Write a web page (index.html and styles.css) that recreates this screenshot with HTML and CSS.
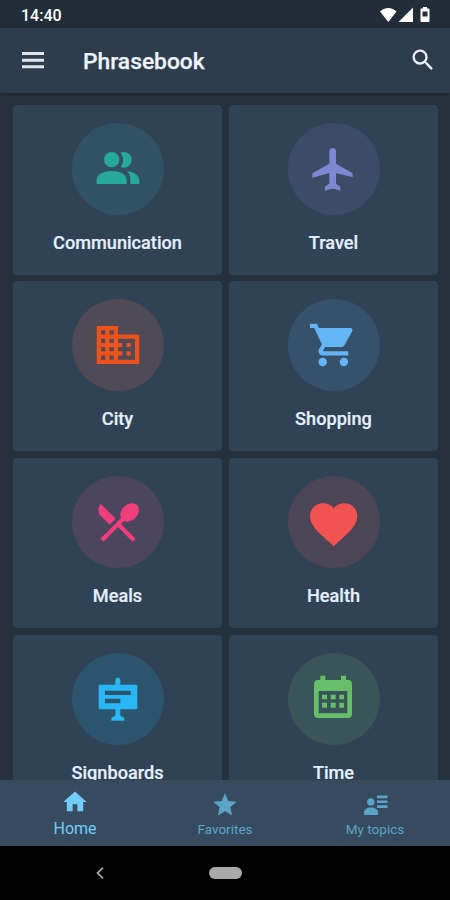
FILE: index.html
```html
<!DOCTYPE html>
<html lang="en">
<head>
<meta charset="utf-8">
<title>Phrasebook</title>
<link rel="stylesheet" href="styles.css">
</head>
<body>
<div class="screen">
  <div class="status">
    <span class="clock">14:40</span>
    <svg class="signals" width="52" height="18" viewBox="0 0 52 18">
      <path d="M0 5.5C4.5.8 12 .8 16.5 5.500L8.300 16z"/>
      <path d="M33 1.500V16H18.500z"/>
      <path fill-rule="evenodd" d="M42 2.500h1V1h4v1.500h1.500q1 0 1 1V15q0 1-1 1h-7q-1 0-1-1V3.500q0-1 1-1zM42.500 5.500v5h5v-5z"/>
    </svg>
  </div>
  <header class="appbar">
    <svg class="menu" width="22" height="17" viewBox="0 0 22 17"><path d="M0 0h22v3H0zM0 6.700h22v3H0zM0 13.300h22v3H0z"/></svg>
    <h1 class="title">Phrasebook</h1>
    <svg class="search" width="28" height="28" viewBox="0 0 24 24"><path d="M15.500 14h-.79l-.28-.27A6.471 6.471 0 0 0 16 9.500 6.500 6.500 0 1 0 9.500 16c1.610 0 3.090-.59 4.230-1.570l.27.28v.79l5 4.990L20.490 19l-4.990-5zm-6 0C7.010 14 5 11.990 5 9.500S7.010 5 9.500 5 14 7.010 14 9.500 11.990 14 9.500 14z"/></svg>
  </header>
  <main class="grid">
    <div class="card teal">
      <div class="disc"><svg viewBox="-138 -138 276 276"><circle cx="-19" cy="-28" r="23"/><path d="M8-49a23.500 23.500 0 1 1 0 43c10-13 10-30 0-43zM-64 45V33C-64 14-40 6-19 6S26 14 26 33v12zM27 7C50 9 64 20 64 36v9H37V32C37 22 34 14 27 7z"/></svg></div>
      <div class="label">Communication</div>
    </div>
    <div class="card indigo">
      <div class="disc"><svg viewBox="-138 -138 276 276"><path d="M-4-63c5 0 10 4 10 9v38L56 13v12L6 12v32l13 9v12l-14-4q-9-3-18 0l-14 4V53l13-9V12l-51 14V13l51-29v-38c0-5 5-9 10-9z"/></svg></div>
      <div class="label">Travel</div>
    </div>
    <div class="card orange">
      <div class="disc"><svg viewBox="-138 -138 276 276"><path transform="scale(6.370) translate(-12 -12)" d="M12 7V3H2v18h20V7H12zM6 19H4v-2h2v2zm0-4H4v-2h2v2zm0-4H4V9h2v2zm0-4H4V5h2v2zm4 12H8v-2h2v2zm0-4H8v-2h2v2zm0-4H8V9h2v2zm0-4H8V5h2v2zm10 12h-8v-2h2v-2h-2v-2h2v-2h-2V9h8v10zm-2-8h-2v2h2v-2zm0 4h-2v2h2v-2z"/></svg></div>
      <div class="label">City</div>
    </div>
    <div class="card blue">
      <div class="disc"><svg viewBox="-138 -138 276 276"><path transform="translate(-2 0) scale(6.370) translate(-12 -12)" d="M7 18c-1.100 0-1.990.9-1.990 2S5.900 22 7 22s2-.9 2-2-.9-2-2-2zM1 2v2h2l3.600 7.590-1.350 2.450c-.16.28-.25.61-.25.96 0 1.100.9 2 2 2h12v-2H7.420c-.14 0-.25-.11-.25-.25l.03-.12.9-1.630h7.450c.75 0 1.410-.41 1.750-1.030l3.580-6.490A1.003 1.003 0 0 0 20 4H5.210l-.94-2H1zm16 16c-1.100 0-1.990.9-1.990 2s.89 2 1.990 2 2-.9 2-2-.9-2-2-2z"/></svg></div>
      <div class="label">Shopping</div>
    </div>
    <div class="card pink">
      <div class="disc"><svg viewBox="-138 -138 276 276"><path transform="scale(6.370) translate(-12 -12)" d="M8.100 13.340l2.830-2.830L3.910 3.500c-1.560 1.560-1.560 4.090 0 5.660l4.190 4.180zm6.780-1.810c1.530.71 3.680.21 5.270-1.380 1.910-1.910 2.280-4.650.81-6.120-1.460-1.460-4.200-1.100-6.120.81-1.590 1.590-2.090 3.740-1.380 5.270L3.700 19.870l1.410 1.410L12 14.410l6.880 6.880 1.410-1.410L13.410 13l1.470-1.470z"/></svg></div>
      <div class="label">Meals</div>
    </div>
    <div class="card red">
      <div class="disc"><svg viewBox="-138 -138 276 276"><path transform="translate(-1 7) scale(7.100 7) translate(-12 -12)" d="M12 21.350l-1.450-1.320C5.400 15.360 2 12.280 2 8.500 2 5.420 4.420 3 7.500 3c1.740 0 3.410.81 4.500 2.090C13.090 3.810 14.760 3 16.500 3 19.580 3 22 5.420 22 8.500c0 3.780-3.400 6.860-8.550 11.540L12 21.350z"/></svg></div>
      <div class="label">Health</div>
    </div>
    <div class="card sky">
      <div class="disc"><svg viewBox="-138 -138 276 276"><path fill-rule="evenodd" d="M-8-43v-13a7.500 7.500 0 0 1 15 0v13h47q4 0 4 4v66q0 4-4 4H7v17q0 3 3 4 9 2 9 9v4h-39v-4q0-7 9-9 3-1 3-4V31h-46q-4 0-4-4v-66q0-4 4-4zM-39-25v13h77v-13zM-39-1v14H7V-1z"/></svg></div>
      <div class="label">Signboards</div>
    </div>
    <div class="card green">
      <div class="disc"><svg viewBox="-138 -138 276 276"><path fill-rule="evenodd" d="M-41-57v-13h15v13h47v-13h15v13h6q12 0 12 12v90q0 12-12 12h-90q-12 0-12-12v-90q0-12 12-12zM-46-24v67h86v-67z"/><path d="M-36-13h15V1h-15zM-10-13H5V1h-15zM16-13h14V1H16zM-36 11h15v15h-15zM-10 11H5v15h-15zM16 11h14v15H16z"/></svg></div>
      <div class="label">Time</div>
    </div>
  </main>
  <nav class="tabs">
    <div class="tab active">
      <svg width="28" height="28" viewBox="0 0 24 24"><path d="M10 20v-6h4v6h5v-8h3L12 3 2 12h3v8z"/></svg>
      <span>Home</span>
    </div>
    <div class="tab">
      <svg width="28" height="28" viewBox="0 0 24 24"><path d="M12 17.270L18.180 21l-1.640-7.030L22 9.240l-7.190-.61L12 2 9.190 8.630 2 9.240l5.460 4.730L5.820 21z"/></svg>
      <span>Favorites</span>
    </div>
    <div class="tab">
      <svg width="28" height="28" viewBox="0 0 28 28"><circle cx="9.800" cy="10.900" r="3.700"/><path d="M3 23.900v-2.400c0-3.200 3.500-5 7-5s7 1.800 7 5v2.400zM16 4.600h10.500v2.700H16zM16 9.400h10.500v2.700H16zM16 14.200h10.500v2.700H16z"/></svg>
      <span>My topics</span>
    </div>
  </nav>
  <div class="system">
    <svg class="back" width="8" height="12" viewBox="0 0 8 12"><path d="M7 .7 1.500 6 7 11.300"/></svg>
    <div class="pill"></div>
    <div></div>
  </div>
</div>
</body>
</html>
```
FILE: styles.css
```css
* { box-sizing: border-box; }

body {
  margin: 0;
  background: #000;
  font-family: Roboto, "Liberation Sans", sans-serif;
}

svg { display: block; fill: currentColor; }

.screen {
  width: 450px;
  height: 900px;
  display: flex;
  flex-direction: column;
  overflow: hidden;
  background: #25313c;
}

.status {
  flex: none;
  height: 28px;
  padding: 0 19px 0 21px;
  display: flex;
  align-items: center;
  justify-content: space-between;
  background: #212e3a;
  color: #fff;
}
.clock { font-size: 16px; font-weight: 500; line-height: 28px; padding-top: 3px; }
.signals { margin-right: -1px; margin-top: 1px; }

.appbar {
  flex: none;
  height: 65px;
  padding: 0 13px 0 22px;
  display: flex;
  align-items: center;
  background: #2d3d4d;
  color: #eef3fa;
  box-shadow: 0 1px 3px rgba(0, 0, 0, .25);
}
.menu { margin-bottom: 1px; color: #e2e5e8; }
.title {
  flex: 1;
  margin: 3px 0 0 39px;
  font-size: 22.800px;
  font-weight: 500;
  line-height: 30px;
  -webkit-text-stroke: .25px currentColor;
}
.search { margin-bottom: 2px; }

.grid {
  flex: 1;
  min-height: 0;
  overflow: hidden;
  padding: 11.500px 12px 0 13px;
  display: grid;
  grid-template-columns: 209px 209px;
  grid-auto-rows: 170px;
  gap: 6.700px 7px;
}

.card {
  display: flex;
  flex-direction: column;
  align-items: center;
  padding-top: 18px;
  border-radius: 4px;
  background: #304256;
}
.disc {
  width: 92px;
  height: 92px;
  border-radius: 50%;
}
.label {
  margin-top: 16px;
  font-size: 18.150px;
  font-weight: 500;
  line-height: 24px;
  color: #e4effb;
  -webkit-text-stroke: .2px currentColor;
}

.teal .disc { color: #26a99a; background: #315264; }
.indigo .disc { color: #7e87d2; background: #3c4b66; }
.orange .disc { color: #ee521c; background: #4f4a55; }
.blue .disc { color: #64b5f6; background: #36516b; }
.pink .disc { color: #f03e7c; background: #4b465d; }
.red .disc { color: #f05351; background: #4c4555; }
.sky .disc { color: #29b6f6; background: #2c546c; }
.green .disc { color: #66bf6b; background: #395557; }

.tabs {
  flex: none;
  height: 66px;
  display: grid;
  grid-template-columns: repeat(3, 1fr);
  background: #364b60;
}
.tab {
  display: flex;
  flex-direction: column;
  align-items: center;
  padding-top: 11px;
  font-size: 13.500px;
  line-height: 20px;
  color: #5ba3c7;
}
.tab.active { padding-top: 8px; font-size: 16px; color: #74cdf9; }
.tab.active span { margin-top: 3px; }

.system {
  flex: none;
  height: 54px;
  display: grid;
  grid-template-columns: 1fr 33px 1fr;
  align-items: center;
  background: #000;
}
.back {
  justify-self: end;
  margin-right: 105px;
  fill: none;
  stroke: #a5a5a5;
  stroke-width: 1.800;
}
.pill { height: 12px; border-radius: 6px; background: #a9a9a9; }
```
